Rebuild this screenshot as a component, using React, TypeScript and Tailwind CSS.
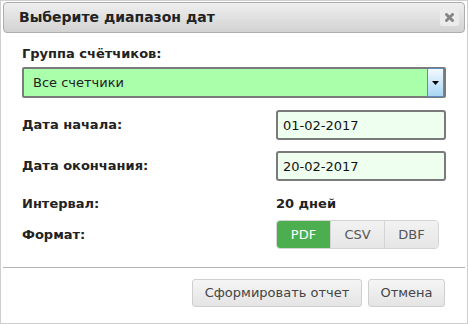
import React, { useState } from 'react';

const font = { fontFamily: '"DejaVu Sans", Verdana, sans-serif' };

const formats = ['PDF', 'CSV', 'DBF'];

export default function App() {
  const [format, setFormat] = useState('PDF');

  return (
    <div
      className="flex h-[324px] w-[468px] flex-col border border-[#cfcfcf] bg-white px-[2px] pt-[1px] text-[13px] text-[#222]"
      style={font}
    >
      {/* title bar */}
      <div className="flex h-[31px] items-center justify-between rounded-[4px] border border-[#adadad] bg-gradient-to-b from-[#efefef] to-[#d2d2d2] pl-[15px] pr-[5px]">
        <span className="text-[14px] font-bold">Выберите диапазон дат</span>
        <button
          type="button"
          className="flex h-[17px] w-[19px] items-center justify-center rounded-[2px] bg-[#ebebeb]"
        >
          <svg width="9" height="9" viewBox="0 0 9 9">
            <path d="M1.5 1.5L7.5 7.5M7.5 1.5L1.5 7.5" stroke="#858585" strokeWidth="2.8" strokeLinecap="square" />
          </svg>
        </button>
      </div>

      <div className="flex flex-col px-[19px]">
        <div className="mt-[13px] h-[16px] font-bold leading-[16px]">Группа счётчиков:</div>

        <div className="mt-[5px] flex h-[31px] items-stretch rounded-[2px] border-2 border-[#7a7a7a] bg-[#aaffaa]">
          <span className="flex flex-1 items-center pl-[9px]">Все счетчики</span>
          <span className="my-[-1px] flex w-[17px] items-center justify-center border border-[#5a8cbf] bg-gradient-to-b from-[#f2f9ff] to-[#a9d6f5]">
            <svg width="7" height="4" viewBox="0 0 7 4">
              <path d="M0 0H7L3.5 4Z" fill="#000" />
            </svg>
          </span>
        </div>

        <div className="mt-[12px] flex h-[30px] items-center justify-between">
          <span className="font-bold">Дата начала:</span>
          <input
            readOnly
            value="01-02-2017"
            className="h-[30px] w-[170px] rounded-[3px] border-2 border-[#7a7a7a] bg-[#efffef] pl-[5px] text-[13px] text-[#111] outline-none"
            style={font}
          />
        </div>

        <div className="mt-[11px] flex h-[30px] items-center justify-between">
          <span className="font-bold">Дата окончания:</span>
          <input
            readOnly
            value="20-02-2017"
            className="h-[30px] w-[170px] rounded-[3px] border-2 border-[#7a7a7a] bg-[#efffef] pl-[5px] text-[13px] text-[#111] outline-none"
            style={font}
          />
        </div>

        <div className="mt-[15px] flex h-[16px] items-center leading-[16px]">
          <span className="w-[254px] font-bold">Интервал:</span>
          <span className="font-bold">20 дней</span>
        </div>

        <div className="mt-[8px] flex h-[29px] items-center">
          <span className="w-[254px] font-bold">Формат:</span>
          <div className="flex h-[29px] overflow-hidden rounded-[4px] border border-[#d4d4d4]">
            {formats.map((f, i) => (
              <button
                key={f}
                type="button"
                onClick={() => setFormat(f)}
                className={
                  (i > 0 ? 'border-l border-[#d4d4d4] ' : '') +
                  (format === f
                    ? 'w-[53px] bg-[#4cae4f] text-white'
                    : 'w-[54px] bg-gradient-to-b from-[#f2f2f2] to-[#e6e6e6] text-[#555]')
                }
              >
                {f}
              </button>
            ))}
          </div>
        </div>
      </div>

      <div className="mt-[18px] h-px bg-[#b3b3b3]" />

      <div className="mt-[11px] flex justify-end gap-[6px] pr-[20px]">
        <button
          type="button"
          className="h-[28px] w-[170px] rounded-[3px] border border-[#cfcfcf] bg-gradient-to-b from-[#f5f5f5] to-[#e4e4e4] text-[#444]"
        >
          Сформировать отчет
        </button>
        <button
          type="button"
          className="h-[28px] w-[77px] rounded-[3px] border border-[#cfcfcf] bg-gradient-to-b from-[#f5f5f5] to-[#e4e4e4] text-[#444]"
        >
          Отмена
        </button>
      </div>
    </div>
  );
}
